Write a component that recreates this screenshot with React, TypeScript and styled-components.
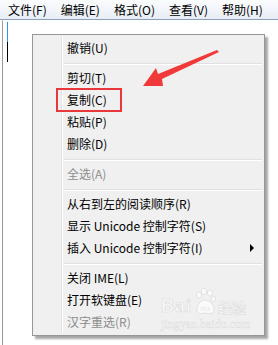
import React from "react";
import styled, { createGlobalStyle } from "styled-components";

const GlobalStyle = createGlobalStyle`
  html, body {
    margin: 0;
    padding: 0;
    background: #ffffff;
  }
  body {
    font-family: "Noto Sans CJK SC", "Liberation Sans", sans-serif;
    font-size: 12px;
    color: #000;
  }
`;

type MenuItem =
  | { kind: "item"; label: string; disabled?: boolean; submenu?: boolean }
  | { kind: "sep" };

const menuBarItems = ["文件(F)", "编辑(E)", "格式(O)", "查看(V)", "帮助(H)"];

const contextItems: MenuItem[] = [
  { kind: "item", label: "撤销(U)" },
  { kind: "sep" },
  { kind: "item", label: "剪切(T)" },
  { kind: "item", label: "复制(C)" },
  { kind: "item", label: "粘贴(P)" },
  { kind: "item", label: "删除(D)" },
  { kind: "sep" },
  { kind: "item", label: "全选(A)", disabled: true },
  { kind: "sep" },
  { kind: "item", label: "从右到左的阅读顺序(R)" },
  { kind: "item", label: "显示 Unicode 控制字符(S)" },
  { kind: "item", label: "插入 Unicode 控制字符(I)", submenu: true },
  { kind: "sep" },
  { kind: "item", label: "关闭 IME(L)" },
  { kind: "item", label: "打开软键盘(E)" },
  { kind: "item", label: "汉字重选(R)", disabled: true },
];

function App() {
  return (
    <Window>
      <GlobalStyle />
      <MenuBar>
        {menuBarItems.map((title) => (
          <MenuBarItem key={title}>{title}</MenuBarItem>
        ))}
      </MenuBar>
      <Editor>
        <Caret />
      </Editor>

      <ContextMenu>
        {contextItems.map((item, index) =>
          item.kind === "sep" ? (
            <Separator key={index} />
          ) : (
            <Item key={index} disabled={item.disabled}>
              <span>{item.label}</span>
              {item.submenu && <SubArrow />}
            </Item>
          )
        )}
      </ContextMenu>

      <Highlight />
      <Arrow width="90" height="45" viewBox="0 0 90 45">
        <path d="M4 40 L17 22 L19 28 L78 4 L80 6 L23 33 L24 40 Z" fill="#f03a3a" />
      </Arrow>

      <Watermark>
        <WatermarkRow>
          <WmBig>Bai</WmBig>
          <Paw width="22" height="28" viewBox="0 0 22 28">
            <g fill="#fafafa" stroke="#dcdcdc" strokeWidth="0.8">
              <ellipse cx="5" cy="7" rx="2.6" ry="3.2" />
              <ellipse cx="10" cy="3.5" rx="2.6" ry="3.2" />
              <ellipse cx="16" cy="5" rx="2.6" ry="3.2" />
              <ellipse cx="19.5" cy="11" rx="2.3" ry="2.8" />
              <path d="M3 22 C3 15 8 12 11 12 C15 12 20 16 20 22 C20 26 16 26 11 25 C6 26 3 26 3 22 Z" />
            </g>
            <text x="6" y="23" fontSize="8" fill="#ededed" fontFamily="Liberation Sans, sans-serif" fontWeight="bold">
              du
            </text>
          </Paw>
          <WmCjk>经验</WmCjk>
        </WatermarkRow>
        <WmSmall>jingyan.baidu.com</WmSmall>
      </Watermark>
    </Window>
  );
}

export default App;

const Window = styled.div`
  position: relative;
  width: 278px;
  height: 345px;
  overflow: hidden;
  display: flex;
  flex-direction: column;
  background: #ffffff;
`;

const MenuBar = styled.div`
  display: flex;
  align-items: center;
  height: 19px;
  padding-left: 1px;
  background: linear-gradient(#fbfcfe, #e8edf5);
  border-bottom: 1px solid #8c9fb8;
`;

const MenuBarItem = styled.div`
  padding: 0 7px;
  line-height: 19px;
  font-size: 12px;
  white-space: nowrap;
`;

const Editor = styled.div`
  flex: 1;
  margin-left: 2px;
  border-left: 1px solid #9a9a9a;
  border-top: 1px solid #ffffff;
  padding: 1px 0 0 4px;
`;

const Caret = styled.div`
  width: 1px;
  height: 40px;
  background: linear-gradient(#3a8ee6 0 50%, #000 50% 100%);
`;

const ContextMenu = styled.div`
  position: absolute;
  left: 32px;
  top: 34px;
  width: 233px;
  box-sizing: border-box;
  padding: 2px;
  background: #f0f0f0;
  border: 1px solid #979797;
  box-shadow: 3px 3px 2px rgba(0, 0, 0, 0.35);

  &::before {
    content: "";
    position: absolute;
    left: 28px;
    top: 2px;
    bottom: 2px;
    width: 1px;
    background: #e2e3e3;
    box-shadow: 1px 0 0 #ffffff;
  }
`;

const Item = styled.div<{ disabled?: boolean }>`
  display: flex;
  align-items: center;
  justify-content: space-between;
  height: 22px;
  line-height: 22px;
  padding: 0 8px 0 32px;
  font-size: 12px;
  white-space: nowrap;
  color: ${({ disabled }) => (disabled ? "#8d8d8d" : "#000000")};
`;

const SubArrow = styled.span`
  width: 0;
  height: 0;
  border-top: 4px solid transparent;
  border-bottom: 4px solid transparent;
  border-left: 4px solid #000;
`;

const Separator = styled.div`
  height: 8px;
  margin-left: 29px;
  display: flex;
  align-items: center;

  &::after {
    content: "";
    flex: 1;
    height: 1px;
    background: #e0e0e0;
    box-shadow: 0 1px 0 #ffffff;
  }
`;

const Highlight = styled.div`
  position: absolute;
  left: 56px;
  top: 88px;
  width: 66px;
  height: 24px;
  box-sizing: border-box;
  border: 2px solid #e8383a;
`;

const Arrow = styled.svg`
  position: absolute;
  left: 139px;
  top: 46px;
`;

const Watermark = styled.div`
  position: absolute;
  left: 161px;
  top: 288px;
  display: flex;
  flex-direction: column;
  align-items: flex-start;
  pointer-events: none;
`;

const WatermarkRow = styled.div`
  display: flex;
  align-items: flex-end;
  gap: 2px;
`;

const WmBig = styled.span`
  font-family: "Liberation Sans", sans-serif;
  font-weight: bold;
  font-size: 18px;
  line-height: 17px;
  letter-spacing: 1px;
  color: #f9f9f9;
  -webkit-text-stroke: 0.6px #dadada;
  margin-bottom: 1px;
`;

const Paw = styled.svg`
  display: block;
`;

const WmCjk = styled.span`
  font-family: "Noto Sans CJK SC", sans-serif;
  font-weight: bold;
  font-size: 14px;
  line-height: 16px;
  color: #f9f9f9;
  -webkit-text-stroke: 0.5px #dadada;
  margin-bottom: 1px;
`;

const WmSmall = styled.span`
  font-family: "Liberation Serif", serif;
  font-size: 12px;
  line-height: 13px;
  margin-top: 2px;
  color: #f7f7f7;
  -webkit-text-stroke: 0.4px #dcdcdc;
`;
